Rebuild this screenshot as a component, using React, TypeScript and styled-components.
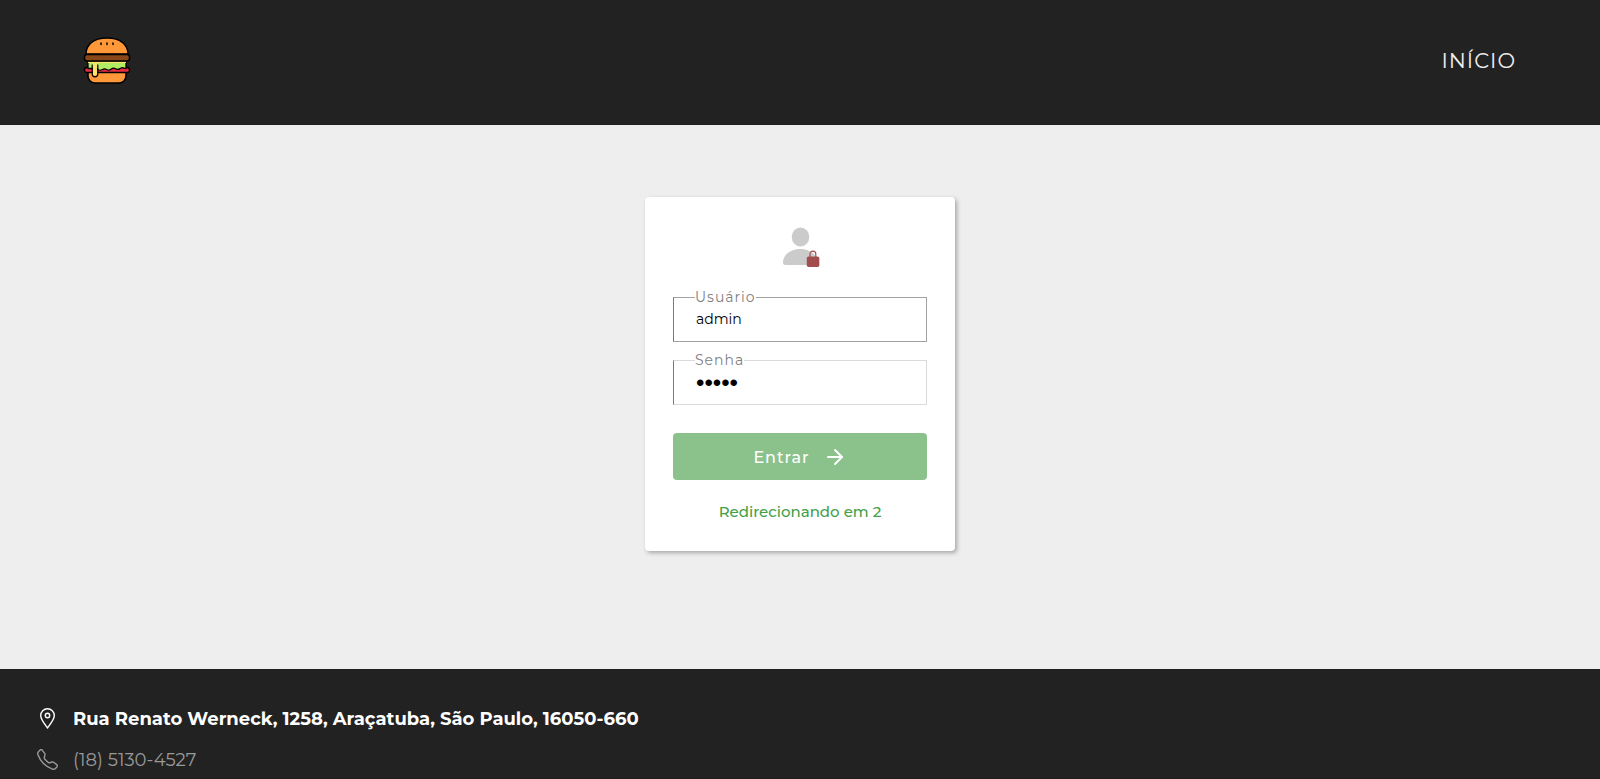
import React from 'react';
import styled, { createGlobalStyle } from 'styled-components';
import { BsTelephone } from 'react-icons/bs';
import { ArrowRight } from 'lucide-react';

const GlobalStyle = createGlobalStyle`
  *, *::before, *::after { box-sizing: border-box; }
  body {
    margin: 0;
    background: #eee;
    font-family: Montserrat, Inter, "Liberation Sans", sans-serif;
  }
`;

const Page = styled.div`
  display: flex;
  flex-direction: column;
  min-height: 100vh;
`;

const Header = styled.header`
  display: flex;
  align-items: center;
  justify-content: space-between;
  padding: 37px 84px 39px 83px;
  background: #222;
  border-bottom: 1px solid #231c1e;
`;

const HomeLink = styled.a`
  display: flex;
`;

const NavLink = styled.a`
  color: #eee;
  font-size: 21px;
  font-weight: 400;
  line-height: 24px;
  letter-spacing: 1px;
  text-decoration: none;
  text-transform: uppercase;
`;

const Main = styled.main`
  flex: 1;
  display: flex;
  justify-content: center;
  align-items: flex-start;
  padding: 72px 16px;
`;

const Card = styled.form`
  display: flex;
  flex-direction: column;
  width: 310px;
  max-width: 100%;
  padding: 28px;
  background: #fff;
  border-radius: 4px;
  box-shadow: 2px 2px 4px rgba(0, 0, 0, 0.3);
`;

const Avatar = styled.svg`
  align-self: center;
  margin-bottom: 19px;
`;

const Field = styled.fieldset<{ $active?: boolean }>`
  min-width: 0;
  height: 54px;
  margin: 0 0 9px;
  padding: 0 21px;
  border: 1px solid ${(p) => (p.$active ? '#a3a3a3' : '#dadada')};
  border-left-color: #43a047;
`;

const Legend = styled.legend`
  padding: 0;
  color: #808080;
  font-size: 14px;
  font-weight: 400;
  line-height: 18px;
  letter-spacing: 1px;
`;

const Input = styled.input`
  display: block;
  width: 100%;
  height: 26px;
  padding: 0 1px;
  border: 0;
  outline: 0;
  background: transparent;
  color: #000;
  font: inherit;
  font-size: 14px;

  &[type='password'] {
    height: 28px;
    font-family: "Liberation Sans", sans-serif;
    font-size: 24px;
  }
`;

const Submit = styled.button`
  display: flex;
  align-items: center;
  justify-content: center;
  gap: 13px;
  height: 47px;
  margin-top: 19px;
  padding: 1px 6px 0;
  border: 0;
  border-radius: 4px;
  background: #8bc18b;
  color: #fff;
  font: inherit;
  font-size: 16px;
  font-weight: 500;
  letter-spacing: 1px;
`;

const Message = styled.p`
  margin: 22px 0 1px;
  color: #43a047;
  font-size: 15px;
  font-weight: 500;
  line-height: 20px;
  text-align: center;
`;

const Footer = styled.footer`
  padding: 38px 37px 5px;
  background: #222;
  border-bottom: 1px solid #231c1e;
`;

const Contact = styled.address`
  display: flex;
  flex-direction: column;
  gap: 16px;
  font-style: normal;
`;

const ContactRow = styled.div<{ $strong?: boolean }>`
  display: flex;
  align-items: center;
  gap: 15px;
  color: ${(p) => (p.$strong ? '#fff' : '#999')};
  font-size: 18px;
  font-weight: ${(p) => (p.$strong ? 700 : 400)};
  line-height: 25px;

  svg {
    flex: none;
    margin-bottom: 2px;
  }
`;

const Burger = () => (
  <svg width="48" height="48" viewBox="0 1 48 48" fill="none" stroke="#000" strokeWidth="1.5" strokeLinejoin="round" role="img" aria-label="Hamburguer">
    <path d="M5 35h38v5a7 7 0 0 1-7 7H12a7 7 0 0 1-7-7z" fill="#ff9838" />
    <path d="M3 18C3 9 10 2 24 2S45 9 45 18z" fill="#ff9838" />
    <path d="M4 31.500h40a2.500 2.500 0 0 1 0 5H4a2.500 2.500 0 0 1 0-5z" fill="#e52c40" strokeWidth="1.300" />
    <path d="M5 26h38v6.500c-2 0-3-1.500-5-.500s-3 2.500-6 .500-4 2.500-7 1.500-3-2-5.500-.500-3.500 1-5.500-1H5z" fill="#b1ec65" strokeWidth="1.300" />
    <path d="M5 26.300h38" stroke="#fbe36a" strokeWidth="1.500" />
    <path d="M10 26h4v12q0 1.500-2 1.500T10 38z" fill="#fbe36a" stroke="none" />
    <path d="M9.200 28.500V38a2.800 2.800 0 0 0 5.600 0v-9.500" strokeWidth="1.200" />
    <rect x="1.500" y="18.500" width="45" height="6.500" rx="2.500" fill="#874718" />
    <path d="M18 7v1.500M24 7v1.500M30 7v1.500" strokeLinecap="round" />
  </svg>
);

const PinIcon = () => (
  <svg width="21" height="21" viewBox="0 0 21 21" fill="none" stroke="currentColor" strokeWidth="1.400" aria-hidden="true">
    <path d="M10.500 20C8 16.500 3.700 11.500 3.700 7.500a6.800 6.800 0 0 1 13.600 0C17.300 11.500 13 16.500 10.500 20Z" strokeLinejoin="round" />
    <circle cx="10.500" cy="7.500" r="2.200" />
  </svg>
);

export default function App() {
  return (
    <>
      <GlobalStyle />
      <Page>
        <Header>
          <HomeLink href="#"><Burger /></HomeLink>
          <nav><NavLink href="#">Início</NavLink></nav>
        </Header>
        <Main>
          <Card onSubmit={(e) => e.preventDefault()}>
            <Avatar width="44" height="44" viewBox="0 0 44 44" aria-hidden="true">
              <ellipse cx="22.500" cy="12" rx="8.800" ry="9.500" fill="#cbcbcb" />
              <path d="M5 37.500C5 29.500 13 24 22.300 24s17 5.500 17 13.500q0 2.500-2.500 2.500H7.300Q5 40 5 37.500Z" fill="#cbcbcb" />
              <rect x="28.800" y="31.500" width="12.500" height="10.500" rx="1.800" fill="#a34c4e" />
              <path d="M32 32.500v-3.500a2.900 2.900 0 0 1 5.800 0v3.500" fill="none" stroke="#a34c4e" strokeWidth="1.200" />
            </Avatar>
            <Field $active>
              <Legend><label htmlFor="user">Usuário</label></Legend>
              <Input id="user" type="text" defaultValue="admin" />
            </Field>
            <Field>
              <Legend><label htmlFor="password">Senha</label></Legend>
              <Input id="password" type="password" defaultValue="admin" />
            </Field>
            <Submit type="submit">Entrar <ArrowRight size={24} aria-hidden="true" /></Submit>
            <Message role="status">Redirecionando em 2</Message>
          </Card>
        </Main>
        <Footer>
          <Contact>
            <ContactRow $strong><PinIcon />Rua Renato Werneck, 1258, Araçatuba, São Paulo, 16050-660</ContactRow>
            <ContactRow><BsTelephone size={21} aria-hidden="true" />(18) 5130-4527</ContactRow>
          </Contact>
        </Footer>
      </Page>
    </>
  );
}
